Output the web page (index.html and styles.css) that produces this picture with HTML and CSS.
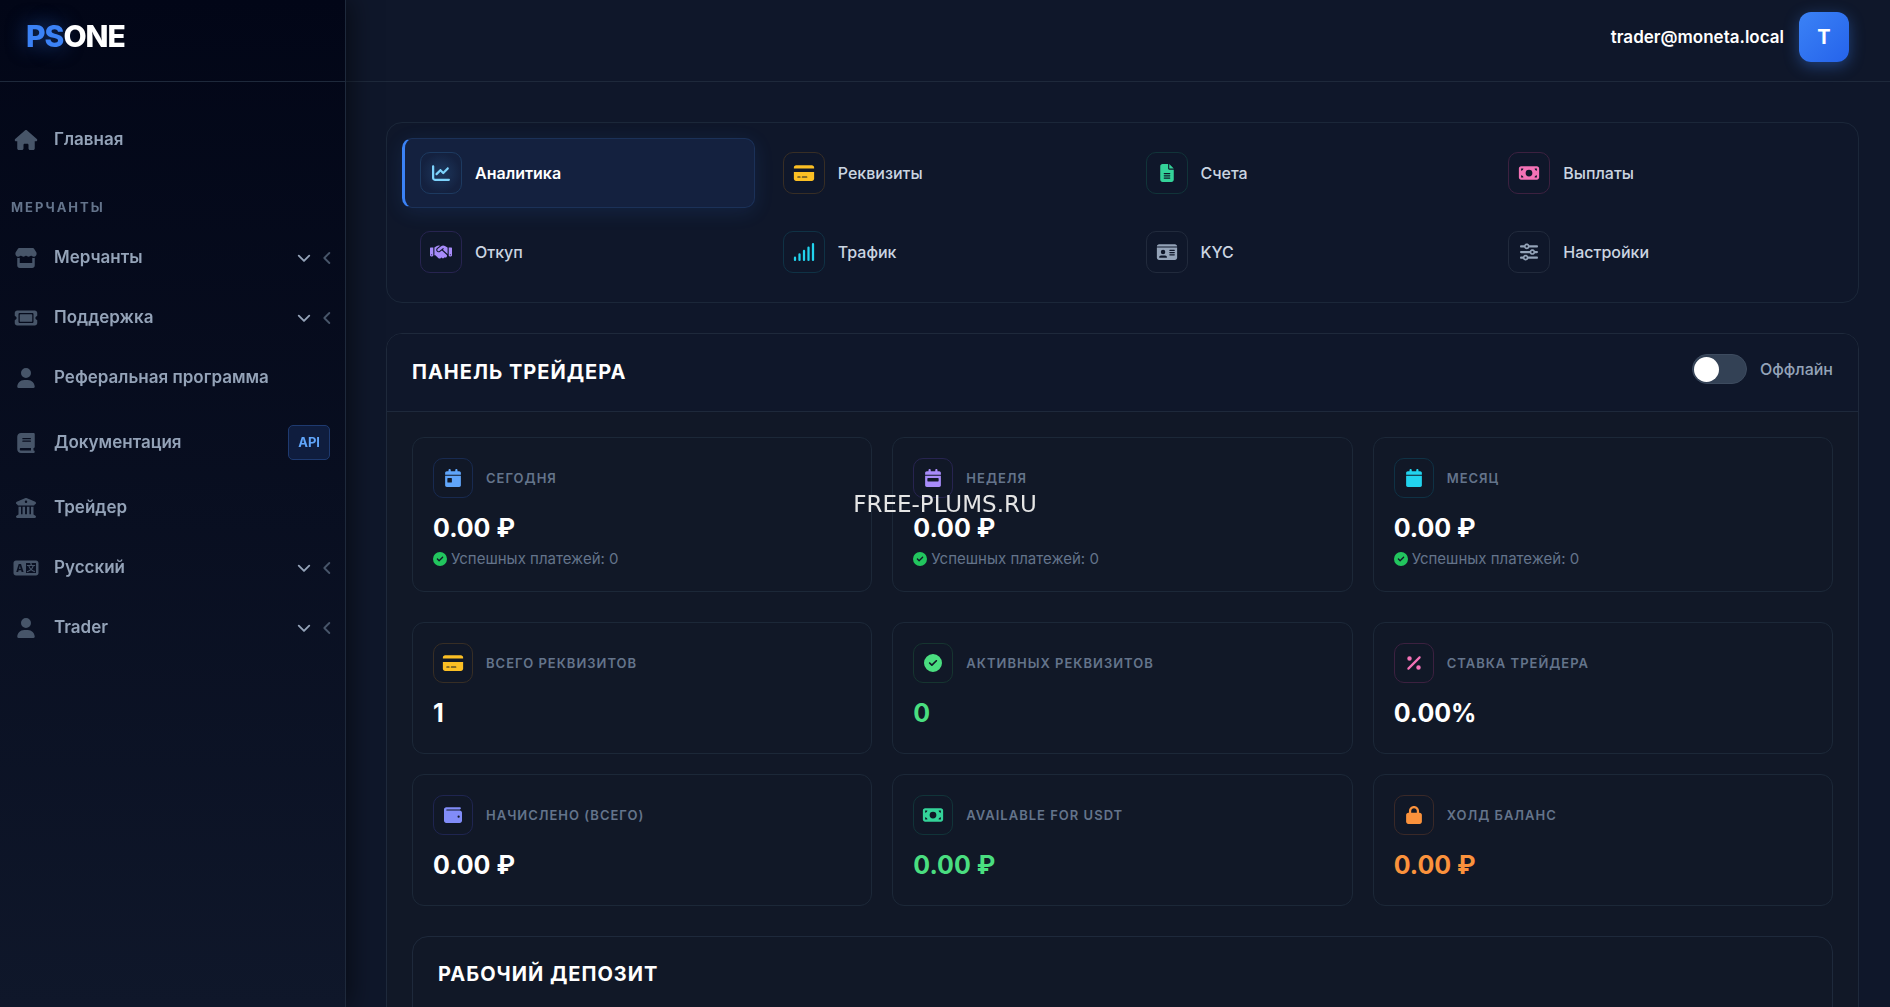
FILE: index.html
```html
<!DOCTYPE html>
<html lang="ru">
<head>
	<meta charset="UTF-8">
	<title>PSONE</title>
	<link rel="stylesheet" href="styles.css">
</head>
<body>
	<svg class="sprite" aria-hidden="true">
		<symbol id="i-home" viewBox="0 0 576 512"><path d="M575.8 255.5c0 18-15 32.1-32 32.1h-32l.7 160.2c0 2.7-.2 5.4-.5 8.1V472c0 22.1-17.9 40-40 40H456c-1.1 0-2.2 0-3.3-.1c-1.4 .1-2.8 .1-4.2 .1H416 392c-22.1 0-40-17.9-40-40V448 384c0-17.7-14.3-32-32-32H256c-17.7 0-32 14.3-32 32v64 24c0 22.1-17.9 40-40 40H160 128.1c-1.5 0-3-.1-4.5-.2c-1.2 .1-2.4 .2-3.6 .2H104c-22.1 0-40-17.9-40-40V360c0-.9 0-1.9 .1-2.8V287.6H32c-18 0-32-14-32-32.1c0-9 3-17 10-24L266.4 8c7-7 15-8 22-8s15 2 21 7L564.8 231.5c8 7 12 15 11 24z"/></symbol>
		<symbol id="i-store" viewBox="0 0 576 512"><path d="M547.6 103.8L490.3 13.1C485.2 5 476.1 0 466.4 0H109.6C99.9 0 90.8 5 85.7 13.1L28.3 103.8c-29.6 46.8-3.4 111.9 51.9 119.4c4 .5 8.1 .8 12.1 .8c26.1 0 49.3-11.4 65.2-29c15.9 17.6 39.1 29 65.2 29c26.1 0 49.3-11.4 65.2-29c15.9 17.6 39.1 29 65.2 29c26.2 0 49.3-11.4 65.2-29c16 17.6 39.1 29 65.2 29c4.1 0 8.1-.3 12.1-.8c55.5-7.4 81.8-72.5 52.1-119.4zM499.7 254.9l-.1 0c-5.3 .7-10.7 1.1-16.2 1.1c-12.4 0-24.3-1.9-35.4-5.3V384H128V250.6c-11.2 3.5-23.2 5.4-35.6 5.4c-5.5 0-11-.4-16.3-1.1l-.1 0c-4.1-.6-8.1-1.3-12-2.3V384v64c0 35.3 28.7 64 64 64H448c35.3 0 64-28.7 64-64V384 252.6c-4 1-8 1.8-12.3 2.3z"/></symbol>
		<symbol id="i-ticket" viewBox="0 0 576 512"><path d="M64 64C28.7 64 0 92.7 0 128v64c0 8.8 7.4 15.7 15.7 18.6C34.5 217.1 48 235 48 256s-13.5 38.9-32.3 45.4C7.4 304.3 0 311.2 0 320v64c0 35.3 28.7 64 64 64H512c35.3 0 64-28.7 64-64V320c0-8.8-7.4-15.7-15.7-18.6C541.5 294.9 528 277 528 256s13.5-38.9 32.3-45.4c8.3-2.9 15.7-9.8 15.7-18.6V128c0-35.3-28.7-64-64-64H64zm64 112l0 160c0 8.8 7.2 16 16 16H432c8.8 0 16-7.2 16-16V176c0-8.8-7.2-16-16-16H144c-8.8 0-16 7.2-16 16zM96 160c0-17.7 14.3-32 32-32H448c17.7 0 32 14.3 32 32V352c0 17.7-14.3 32-32 32H128c-17.7 0-32-14.3-32-32V160z"/></symbol>
		<symbol id="i-user" viewBox="0 0 448 512"><path d="M224 256A128 128 0 1 0 224 0a128 128 0 1 0 0 256zm-45.7 48C79.8 304 0 383.8 0 482.3C0 498.7 13.3 512 29.7 512H418.3c16.4 0 29.7-13.3 29.7-29.7C448 383.8 368.2 304 269.7 304H178.3z"/></symbol>
		<symbol id="i-book" viewBox="0 0 448 512"><path d="M96 0C43 0 0 43 0 96V416c0 53 43 96 96 96H384h32c17.7 0 32-14.3 32-32s-14.3-32-32-32V384c17.7 0 32-14.3 32-32V32c0-17.7-14.3-32-32-32H384 96zm0 384H352v64H96c-17.7 0-32-14.3-32-32s14.3-32 32-32zm32-240c0-8.8 7.2-16 16-16H336c8.8 0 16 7.2 16 16s-7.2 16-16 16H144c-8.8 0-16-7.2-16-16zm16 48H336c8.8 0 16 7.2 16 16s-7.2 16-16 16H144c-8.8 0-16-7.2-16-16s7.2-16 16-16z"/></symbol>
		<symbol id="i-bank" viewBox="0 0 512 512"><path d="M243.4 2.6l-224 96c-14 6-21.8 21-18.7 35.8S16.8 160 32 160v8c0 13.3 10.7 24 24 24H456c13.3 0 24-10.7 24-24v-8c15.2 0 28.3-10.7 31.3-25.6s-4.8-29.9-18.7-35.8l-224-96c-8-3.4-17.2-3.4-25.2 0zM128 224H64V420.3c-.6 .3-1.2 .7-1.8 1.1l-48 32c-11.7 7.8-17 22.4-12.9 35.9S17.9 512 32 512H480c14.1 0 26.5-9.2 30.6-22.7s-1.1-28.1-12.9-35.9l-48-32c-.6-.4-1.2-.7-1.8-1.1V224H384V416H344V224H280V416H232V224H168V416H128V224zM256 64a32 32 0 1 1 0 64 32 32 0 1 1 0-64z"/></symbol>
		<symbol id="i-down" viewBox="0 0 12 12"><path class="line" d="M1.5 4L6 8.5 10.5 4"/></symbol>
		<symbol id="i-left" viewBox="0 0 12 12"><path class="line" d="M8 1.7L3.7 6l4.3 4.3"/></symbol>
		<symbol id="i-chart" viewBox="0 0 512 512"><path d="M64 64c0-17.7-14.3-32-32-32S0 46.3 0 64V400c0 44.2 35.8 80 80 80H480c17.7 0 32-14.3 32-32s-14.3-32-32-32H80c-8.8 0-16-7.2-16-16V64zm406.6 86.6c12.5-12.5 12.5-32.8 0-45.3s-32.8-12.5-45.3 0L320 210.7l-57.4-57.4c-12.5-12.5-32.8-12.5-45.3 0l-112 112c-12.5 12.5-12.5 32.8 0 45.3s32.8 12.5 45.3 0L240 221.3l57.4 57.4c12.5 12.5 32.8 12.5 45.3 0l128-128z"/></symbol>
		<symbol id="i-card" viewBox="0 0 576 512"><path d="M64 32C28.7 32 0 60.7 0 96v32H576V96c0-35.3-28.7-64-64-64H64zM576 224H0V416c0 35.3 28.7 64 64 64H512c35.3 0 64-28.7 64-64V224zM112 352h64c8.8 0 16 7.2 16 16s-7.2 16-16 16H112c-8.8 0-16-7.2-16-16s7.2-16 16-16zm112 16c0-8.8 7.2-16 16-16H368c8.8 0 16 7.2 16 16s-7.2 16-16 16H240c-8.8 0-16-7.2-16-16z"/></symbol>
		<symbol id="i-file" viewBox="0 0 384 512"><path d="M64 0C28.7 0 0 28.7 0 64V448c0 35.3 28.7 64 64 64H320c35.3 0 64-28.7 64-64V160H256c-17.7 0-32-14.3-32-32V0H64zM256 0V128H384L256 0zM112 256H272c8.8 0 16 7.2 16 16s-7.2 16-16 16H112c-8.8 0-16-7.2-16-16s7.2-16 16-16zm0 64H272c8.8 0 16 7.2 16 16s-7.2 16-16 16H112c-8.8 0-16-7.2-16-16s7.2-16 16-16zm0 64H272c8.8 0 16 7.2 16 16s-7.2 16-16 16H112c-8.8 0-16-7.2-16-16s7.2-16 16-16z"/></symbol>
		<symbol id="i-bill" viewBox="0 0 576 512"><path d="M64 64C28.7 64 0 92.7 0 128V384c0 35.3 28.7 64 64 64H512c35.3 0 64-28.7 64-64V128c0-35.3-28.7-64-64-64H64zm64 320H64V320c35.3 0 64 28.7 64 64zM64 192V128h64c0 35.3-28.7 64-64 64zM448 384c0-35.3 28.7-64 64-64v64H448zm64-192c-35.3 0-64-28.7-64-64h64v64zM288 160a96 96 0 1 1 0 192 96 96 0 1 1 0-192z"/></symbol>
		<symbol id="i-hands" viewBox="0 0 640 512"><path d="M323.4 85.2l-96.8 78.4c-16.1 13-19.2 36.4-7 53.1c12.9 17.8 38 21.3 55.3 7.8l99.3-77.2c7-5.4 17-4.2 22.5 2.8s4.2 17-2.8 22.5l-20.9 16.2L512 316.8V128h-.7l-3.9-2.5L434.8 79c-15.3-9.8-33.2-15-51.4-15c-21.8 0-43 7.5-60 21.2zm22.8 124.4l-51.7 40.2C263 274.3 217.3 268 193.7 235.6c-22.2-30.5-16.6-73.1 12.7-96.8l83.2-67.3c-11.6-4.9-24.1-7.4-36.8-7.4C234 64 215.7 69.6 200 80l-72 48V352h28.2l91.4 83.4c19.6 17.9 49.9 16.5 67.8-3.1c5.5-6.1 9.2-13.2 11.1-20.6l17 15.6c19.5 17.9 49.9 16.6 67.8-2.9c4.5-4.9 7.8-10.6 9.9-16.5c19.4 13 45.8 10.3 62.1-7.5c17.9-19.5 16.6-49.9-2.9-67.8l-134.2-123zM16 128c-8.8 0-16 7.2-16 16V352c0 17.7 14.3 32 32 32H64c17.7 0 32-14.3 32-32V128H16zM48 320a16 16 0 1 1 0 32 16 16 0 1 1 0-32zM544 128V352c0 17.7 14.3 32 32 32h32c17.7 0 32-14.3 32-32V144c0-8.8-7.2-16-16-16H544zm32 208a16 16 0 1 1 32 0 16 16 0 1 1 -32 0z"/></symbol>
		<symbol id="i-signal" viewBox="0 0 576 512"><path class="bars" d="M32 416V480M160 320V480M288 224V480M416 128V480M544 32V480"/></symbol>
		<symbol id="i-id" viewBox="0 0 576 512"><path d="M0 96l576 0c0-35.3-28.7-64-64-64H64C28.7 32 0 60.7 0 96zm0 32V416c0 35.3 28.7 64 64 64H512c35.3 0 64-28.7 64-64V128H0zM64 405.3c0-29.5 23.9-53.3 53.3-53.3H234.7c29.5 0 53.3 23.9 53.3 53.3c0 5.9-4.8 10.7-10.7 10.7H74.7c-5.9 0-10.7-4.8-10.7-10.7zM176 192a64 64 0 1 1 0 128 64 64 0 1 1 0-128zm176 16c0-8.8 7.2-16 16-16H496c8.8 0 16 7.2 16 16s-7.2 16-16 16H368c-8.8 0-16-7.2-16-16zm0 64c0-8.8 7.2-16 16-16H496c8.8 0 16 7.2 16 16s-7.2 16-16 16H368c-8.8 0-16-7.2-16-16zm0 64c0-8.8 7.2-16 16-16H496c8.8 0 16 7.2 16 16s-7.2 16-16 16H368c-8.8 0-16-7.2-16-16z"/></symbol>
		<symbol id="i-sliders" viewBox="0 0 512 512"><path d="M0 416c0 17.7 14.3 32 32 32l54.7 0c12.3 28.3 40.5 48 73.3 48s61-19.7 73.3-48L480 448c17.7 0 32-14.3 32-32s-14.3-32-32-32l-246.7 0c-12.3-28.3-40.5-48-73.3-48s-61 19.7-73.3 48L32 384c-17.7 0-32 14.3-32 32zm128 0a32 32 0 1 1 64 0 32 32 0 1 1 -64 0zM320 256a32 32 0 1 1 64 0 32 32 0 1 1 -64 0zm32-80c-32.8 0-61 19.7-73.3 48L32 224c-17.7 0-32 14.3-32 32s14.3 32 32 32l246.7 0c12.3 28.3 40.5 48 73.3 48s61-19.7 73.3-48l54.7 0c17.7 0 32-14.3 32-32s-14.3-32-32-32l-54.7 0c-12.3-28.3-40.5-48-73.3-48zM192 128a32 32 0 1 1 0-64 32 32 0 1 1 0 64zm73.3-64C253 35.7 224.8 16 192 16s-61 19.7-73.3 48L32 64C14.3 64 0 78.3 0 96s14.3 32 32 32l86.7 0c12.3 28.3 40.5 48 73.3 48s61-19.7 73.3-48L480 128c17.7 0 32-14.3 32-32s-14.3-32-32-32L265.3 64z"/></symbol>
		<symbol id="i-day" viewBox="0 0 448 512"><path d="M128 0c17.7 0 32 14.3 32 32V64H288V32c0-17.7 14.3-32 32-32s32 14.3 32 32V64h48c26.5 0 48 21.5 48 48v48H0V112C0 85.5 21.5 64 48 64H96V32c0-17.7 14.3-32 32-32zM0 192H448V464c0 26.5-21.5 48-48 48H48c-26.5 0-48-21.5-48-48V192zm80 64c-8.8 0-16 7.2-16 16v96c0 8.8 7.2 16 16 16h96c8.8 0 16-7.2 16-16V272c0-8.8-7.2-16-16-16H80z"/></symbol>
		<symbol id="i-week" viewBox="0 0 448 512"><path d="M128 0c17.7 0 32 14.3 32 32V64H288V32c0-17.7 14.3-32 32-32s32 14.3 32 32V64h48c26.5 0 48 21.5 48 48v48H0V112C0 85.5 21.5 64 48 64H96V32c0-17.7 14.3-32 32-32zM0 192H448V464c0 26.5-21.5 48-48 48H48c-26.5 0-48-21.5-48-48V192zm80 64c-8.8 0-16 7.2-16 16v64c0 8.8 7.2 16 16 16H368c8.8 0 16-7.2 16-16V272c0-8.8-7.2-16-16-16H80z"/></symbol>
		<symbol id="i-month" viewBox="0 0 448 512"><path d="M128 0c17.7 0 32 14.3 32 32V64H288V32c0-17.7 14.3-32 32-32s32 14.3 32 32V64h48c26.5 0 48 21.5 48 48v48H0V112C0 85.5 21.5 64 48 64H96V32c0-17.7 14.3-32 32-32zM0 192H448V464c0 26.5-21.5 48-48 48H48c-26.5 0-48-21.5-48-48V192z"/></symbol>
		<symbol id="i-check" viewBox="0 0 512 512"><path d="M256 512A256 256 0 1 0 256 0a256 256 0 1 0 0 512zM369 209L241 337c-9.4 9.4-24.6 9.4-33.9 0l-64-64c-9.4-9.4-9.4-24.6 0-33.9s24.6-9.4 33.9 0l47 47L335 175c9.4-9.4 24.6-9.4 33.9 0s9.4 24.6 0 33.9z"/></symbol>
		<symbol id="i-percent" viewBox="0 0 384 512"><path d="M374.6 118.6c12.5-12.5 12.5-32.8 0-45.3s-32.8-12.5-45.3 0l-320 320c-12.5 12.5-12.5 32.8 0 45.3s32.8 12.5 45.3 0l320-320zM128 128A64 64 0 1 0 0 128a64 64 0 1 0 128 0zM384 384a64 64 0 1 0 -128 0 64 64 0 1 0 128 0z"/></symbol>
		<symbol id="i-wallet" viewBox="0 0 512 512"><path d="M64 32C28.7 32 0 60.7 0 96V416c0 35.3 28.7 64 64 64H448c35.3 0 64-28.7 64-64V192c0-35.3-28.7-64-64-64H80c-8.8 0-16-7.2-16-16s7.2-16 16-16H448c17.7 0 32-14.3 32-32s-14.3-32-32-32H64zM416 272a32 32 0 1 1 0 64 32 32 0 1 1 0-64z"/></symbol>
		<symbol id="i-lock" viewBox="0 0 448 512"><path d="M144 144v48H304V144c0-44.2-35.8-80-80-80s-80 35.8-80 80zM80 192V144C80 64.5 144.5 0 224 0s144 64.5 144 144v48h16c35.3 0 64 28.7 64 64V448c0 35.3-28.7 64-64 64H64c-35.3 0-64-28.7-64-64V256c0-35.3 28.7-64 64-64H80z"/></symbol>
	</svg>

	<div class="layout">
		<aside class="sidebar">
			<a class="logo" href="#"><span>PS</span>ONE</a>
			<nav class="menu">
				<a class="menu-item" href="#"><svg><use href="#i-home"/></svg>Главная</a>
				<h6 class="menu-title">Мерчанты</h6>
				<button class="menu-item" type="button"><svg><use href="#i-store"/></svg>Мерчанты<svg class="arr"><use href="#i-down"/></svg><svg class="arr2"><use href="#i-left"/></svg></button>
				<button class="menu-item" type="button"><svg><use href="#i-ticket"/></svg>Поддержка<svg class="arr"><use href="#i-down"/></svg><svg class="arr2"><use href="#i-left"/></svg></button>
				<a class="menu-item" href="#"><svg><use href="#i-user"/></svg>Реферальная программа</a>
				<a class="menu-item" href="#"><svg><use href="#i-book"/></svg>Документация<span class="badge">API</span></a>
				<a class="menu-item" href="#"><svg><use href="#i-bank"/></svg>Трейдер</a>
				<button class="menu-item" type="button">
					<svg viewBox="0 0 640 512" aria-hidden="true">
						<path fill-rule="evenodd" d="M64 64H576c35 0 64 29 64 64V384c0 35-29 64-64 64H64c-35 0-64-29-64-64V128c0-35 29-64 64-64zM320 128V384H576V128z"/>
						<text class="lang-a" x="165" y="350">A</text>
						<text class="lang-han" x="448" y="340">文</text>
					</svg>Русский<svg class="arr"><use href="#i-down"/></svg><svg class="arr2"><use href="#i-left"/></svg></button>
				<button class="menu-item" type="button"><svg><use href="#i-user"/></svg>Trader<svg class="arr"><use href="#i-down"/></svg><svg class="arr2"><use href="#i-left"/></svg></button>
			</nav>
		</aside>

		<div class="page">
			<header class="topbar">
				<span class="email">trader@moneta.local</span>
				<button class="avatar" type="button">T</button>
			</header>

			<main class="content">
				<nav class="tabs">
					<a class="tab active" href="#"><span class="ico sky"><svg><use href="#i-chart"/></svg></span>Аналитика</a>
					<a class="tab" href="#"><span class="ico amber"><svg><use href="#i-card"/></svg></span>Реквизиты</a>
					<a class="tab" href="#"><span class="ico emerald"><svg><use href="#i-file"/></svg></span>Счета</a>
					<a class="tab" href="#"><span class="ico pink"><svg><use href="#i-bill"/></svg></span>Выплаты</a>
					<a class="tab" href="#"><span class="ico violet"><svg><use href="#i-hands"/></svg></span>Откуп</a>
					<a class="tab" href="#"><span class="ico cyan"><svg><use href="#i-signal"/></svg></span>Трафик</a>
					<a class="tab" href="#"><span class="ico gray"><svg><use href="#i-id"/></svg></span>KYC</a>
					<a class="tab" href="#"><span class="ico gray"><svg><use href="#i-sliders"/></svg></span>Настройки</a>
				</nav>

				<section class="panel">
					<div class="panel-head">
						<h2>Панель трейдера</h2>
						<div class="status">
							<input type="checkbox" id="online">
							<label for="online">Оффлайн</label>
						</div>
					</div>
					<div class="panel-body">
						<div class="cards">
							<div class="card">
								<div class="card-head"><span class="ico blue"><svg><use href="#i-day"/></svg></span>Сегодня</div>
								<div class="value">0.00 ₽</div>
								<div class="note"><svg><use href="#i-check"/></svg>Успешных платежей: 0</div>
							</div>
							<div class="card">
								<div class="card-head"><span class="ico violet"><svg><use href="#i-week"/></svg></span>Неделя</div>
								<div class="value">0.00 ₽</div>
								<div class="note"><svg><use href="#i-check"/></svg>Успешных платежей: 0</div>
							</div>
							<div class="card">
								<div class="card-head"><span class="ico cyan"><svg><use href="#i-month"/></svg></span>Месяц</div>
								<div class="value">0.00 ₽</div>
								<div class="note"><svg><use href="#i-check"/></svg>Успешных платежей: 0</div>
							</div>
						</div>
						<div class="cards">
							<div class="card">
								<div class="card-head"><span class="ico amber"><svg><use href="#i-card"/></svg></span>Всего реквизитов</div>
								<div class="value">1</div>
							</div>
							<div class="card">
								<div class="card-head"><span class="ico green"><svg><use href="#i-check"/></svg></span>Активных реквизитов</div>
								<div class="value green-text">0</div>
							</div>
							<div class="card">
								<div class="card-head"><span class="ico pink"><svg><use href="#i-percent"/></svg></span>Ставка трейдера</div>
								<div class="value">0.00%</div>
							</div>
							<div class="card">
								<div class="card-head"><span class="ico indigo"><svg><use href="#i-wallet"/></svg></span>Начислено (всего)</div>
								<div class="value">0.00 ₽</div>
							</div>
							<div class="card">
								<div class="card-head"><span class="ico emerald"><svg><use href="#i-bill"/></svg></span>Available for USDT</div>
								<div class="value green-text">0.00 ₽</div>
							</div>
							<div class="card">
								<div class="card-head"><span class="ico orange"><svg><use href="#i-lock"/></svg></span>Холд баланс</div>
								<div class="value orange-text">0.00 ₽</div>
							</div>
						</div>
						<div class="deposit">
							<h2>Рабочий депозит</h2>
						</div>
					</div>
				</section>
			</main>
		</div>
	</div>
	<div class="stamp">FREE-PLUMS.RU</div>
</body>
</html>
```
FILE: styles.css
```css
*{box-sizing: border-box;}
body,h2,h6{margin: 0;padding: 0;}
body{font: 500 16px/25px Inter,"Noto Sans",sans-serif;background: #0f172a;color: #cbd5e1;height: 100vh;overflow: hidden;}
a{color: inherit;text-decoration: none;}
button{font: inherit;color: inherit;background: none;border: 0;cursor: pointer;}
svg{fill: currentColor;flex: none;}
.sprite{position: absolute;width: 0;height: 0;}
.line{fill: none;stroke: currentColor;stroke-width: 1.6;stroke-linecap: round;stroke-linejoin: round;}
.bars{fill: none;stroke: currentColor;stroke-width: 64;stroke-linecap: round;}
.lang-a{font: 800 260px Inter,sans-serif;fill: #0a1021;text-anchor: middle;}
.lang-han{font: 700 230px "Noto Sans CJK SC",sans-serif;text-anchor: middle;}

.layout{display: flex;height: 100vh;}

/* sidebar */
.sidebar{flex: none;width: 346px;border-right: 1px solid #1e293b;background: linear-gradient(180deg,#020617,#0f172a);box-shadow: 4px 0 24px rgba(0,0,0,.5);z-index: 2;}
.logo{display: flex;height: 82px;padding: 11px 26px 0;border-bottom: 1px solid #1e293b;font-size: 30px;line-height: 50px;font-weight: 800;letter-spacing: -1px;color: #fff;}
.logo span{color: #3b82f6;text-shadow: 0 0 20px rgba(59,130,246,.5);}
.menu{padding: 30px 15px 0 10px;}
.menu-item{display: flex;align-items: center;width: 100%;padding: 15px 0;margin-bottom: 5px;font-size: 17px;line-height: 25px;font-weight: 600;color: #94a3b8;text-align: left;}
.menu-item > svg:first-child{width: 32px;height: 20px;margin-right: 12px;color: #475569;}
.menu-item .arr{width: 14px;height: 14px;margin-left: auto;}
.menu-item .arr2{width: 14px;height: 14px;margin: 0 -4px 0 9px;color: #475569;}
.menu-title{padding: 25px 1px 13px;font-size: 13px;line-height: 20px;font-weight: 700;letter-spacing: 2px;text-transform: uppercase;color: #64748b;}
.badge{margin-left: auto;padding: 4px 9px;border: 1px solid #1e3a70;border-radius: 5px;background: #0f1d3e;color: #60a5fa;font-size: 13px;font-weight: 700;}

/* top bar */
.page{flex: 1;min-width: 0;}
.topbar{display: flex;justify-content: flex-end;align-items: center;gap: 15px;height: 82px;padding: 12px 41px 19px;border-bottom: 1px solid #1e293b;}
.email{font-size: 17px;font-weight: 600;color: #fff;}
.avatar{width: 50px;height: 50px;padding: 0;border-radius: 12px;background: linear-gradient(135deg,#3b82f6,#2563eb);box-shadow: 0 4px 15px rgba(59,130,246,.4);color: #fff;font-size: 20px;font-weight: 700;}
.content{padding: 40px 31px 0 40px;}

/* tabs */
.tabs{display: grid;grid-template-columns: repeat(4,1fr);gap: 9px 10px;padding: 15px;margin-bottom: 30px;border: 1px solid #1b2739;border-radius: 16px;}
.tab{display: flex;align-items: center;gap: 13px;padding: 13px 15px;border: 1px solid transparent;border-left-width: 3px;border-radius: 10px;}
.tab.active{background: #14213f;border-color: #1b3158;border-left-color: #3b82f6;box-shadow: 0 4px 20px rgba(59,130,246,.12);color: #fff;font-weight: 600;}
.tab.active .ico{background: radial-gradient(#1d375d,transparent 70%);}
.ico{display: flex;align-items: center;justify-content: center;flex: none;width: 42px;height: 42px;border: 1px solid;border-radius: 10px;}
.ico svg{width: 22px;height: 18px;}
.sky{color: #7dd3fc;border-color: #1d3a60;}
.amber{color: #fbbf24;border-color: #372e25;}
.emerald{color: #34d399;border-color: #113439;}
.pink{color: #f472b6;border-color: #3c2140;}
.violet{color: #a78bfa;border-color: #272450;}
.cyan{color: #22d3ee;border-color: #0f3245;}
.gray{color: #94a3b8;border-color: #212a3c;}
.blue{color: #60a5fa;border-color: #182a50;}
.green{color: #4ade80;border-color: #163530;}
.indigo{color: #818cf8;border-color: #1f2550;}
.orange{color: #fb923c;border-color: #3a2928;}

/* panel */
.panel{border: 1px solid #1e293b;border-radius: 16px;background: #111827;overflow: hidden;}
.panel-head{display: flex;justify-content: space-between;align-items: center;height: 78px;padding: 0 25px;border-bottom: 1px solid #1e293b;background: #0f172a;}
h2{font-size: 20px;line-height: 27px;font-weight: 700;letter-spacing: 1px;text-transform: uppercase;color: #fff;}
.status{display: flex;align-items: center;gap: 13px;padding-bottom: 7px;color: #94a3b8;}
.status input{appearance: none;display: flex;align-items: center;width: 55px;height: 30px;margin: 0;padding: 0 1px;border: 1px solid #3d4b5f;border-radius: 15px;background: #334155;}
.status input::before{content: "";width: 25px;height: 25px;border-radius: 50%;background: #fff;}
.status input:checked{background: #22c55e;justify-content: flex-end;}
.panel-body{padding: 25px;}
.cards{display: grid;grid-template-columns: repeat(3,1fr);gap: 20px;margin-bottom: 30px;}
.card{padding: 20px 20px 21px;border: 1px solid #1c2838;border-radius: 12px;}
.card-head{display: flex;align-items: center;gap: 13px;font-size: 13px;font-weight: 600;letter-spacing: 1px;text-transform: uppercase;color: #64748b;}
.card .ico{width: 40px;height: 40px;}
.value{margin: 15px 0 4px;font-size: 25px;line-height: 30px;font-weight: 700;color: #fff;}
.green-text{color: #4ade80;}
.orange-text{color: #fb923c;}
.note{display: flex;align-items: center;gap: 4px;font-size: 15px;line-height: 23px;font-weight: 400;color: #64748b;}
.note svg{width: 14px;height: 14px;color: #22c55e;}
.deposit{height: 160px;padding: 24px 25px;border: 1px solid #1e293b;border-radius: 16px;}

.stamp{position: fixed;inset: 0;display: flex;align-items: center;justify-content: center;font: 400 23px/26px "DejaVu Sans",sans-serif;color: #e5e5e5;pointer-events: none;}
```
